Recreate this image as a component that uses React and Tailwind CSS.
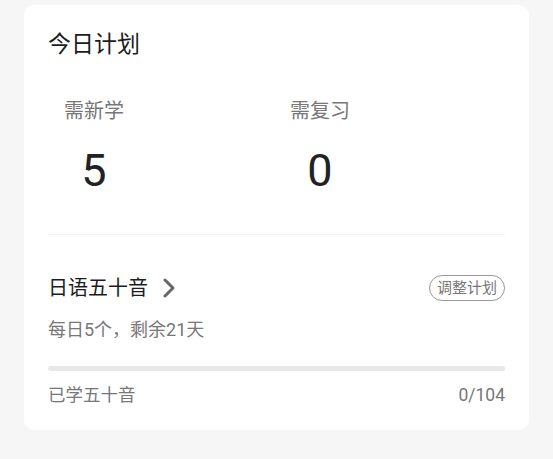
export default function App() {
  const font = { fontFamily: 'Roboto, "Noto Sans CJK SC", sans-serif' };
  return (
    <div className="min-h-screen bg-[#f6f6f6] pt-[5px] px-6 pb-[29px]" style={font}>
      <div className="bg-white rounded-[10px] px-6 pt-[25px] h-[425px]">
        {/* header */}
        <div className="h-[30px] leading-[30px] text-[23px] text-[#1c1c1c]">今日计划</div>

        {/* today stats */}
        <div className="flex pl-4 mt-[38px]">
          <div className="w-[226px]">
            <div className="inline-flex flex-col items-center">
              <div className="h-[26px] leading-[26px] text-[20px] text-[#777]">需新学</div>
              <div className="mt-[24px] h-[45px] leading-[45px] text-[45px] text-[#222]">5</div>
            </div>
          </div>
          <div>
            <div className="inline-flex flex-col items-center">
              <div className="h-[26px] leading-[26px] text-[20px] text-[#777]">需复习</div>
              <div className="mt-[24px] h-[45px] leading-[45px] text-[45px] text-[#222]">0</div>
            </div>
          </div>
        </div>

        <div className="mt-[41px] h-px bg-[#f3f3f3]" />

        {/* course */}
        <div className="mt-[40px] h-[26px] flex items-center justify-between">
          <div className="flex items-center">
            <span className="text-[20px] leading-[26px] text-[#1c1c1c]">日语五十音</span>
            <svg className="ml-[15px]" width="12" height="20" viewBox="0 0 12 20" fill="none">
              <polyline points="2,2 10,10 2,18" stroke="#666" strokeWidth="3" strokeLinecap="round" strokeLinejoin="round" />
            </svg>
          </div>
          <button className="h-[26px] w-[76px] rounded-full border-[1.5px] border-[#999] text-[15px] leading-none text-[#777] flex items-center justify-center">
            调整计划
          </button>
        </div>

        <div className="mt-[17px] h-6 leading-6 text-[18px] text-[#777]">每日5个，剩余21天</div>

        <div className="mt-[24px] h-[5px] rounded-full bg-[#e8e8e8]" />

        <div className="mt-[12px] h-6 leading-6 flex justify-between text-[17.5px] text-[#777]">
          <span>已学五十音</span>
          <span>0/104</span>
        </div>
      </div>
    </div>
  );
}
